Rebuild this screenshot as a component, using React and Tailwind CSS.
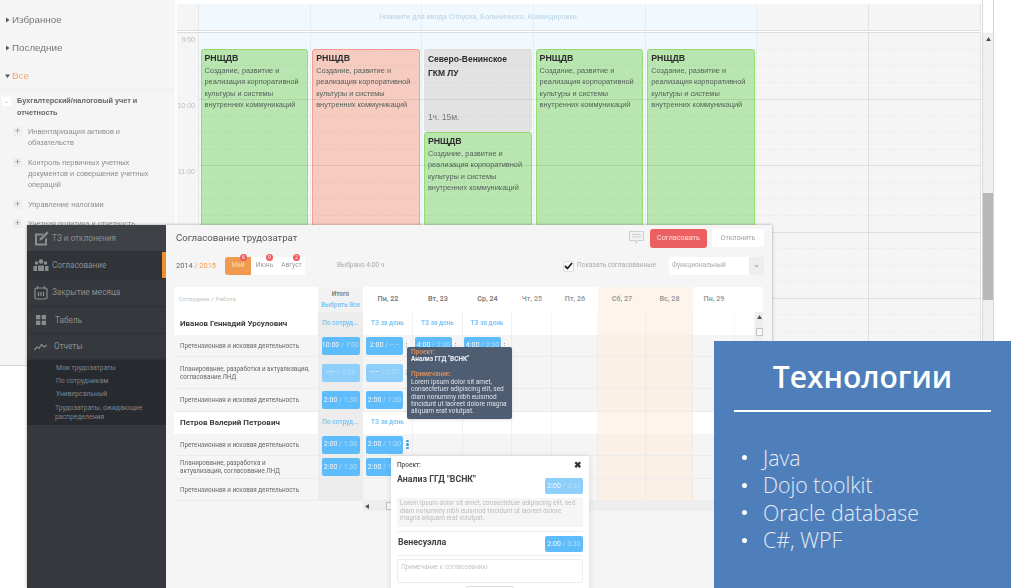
import React from "react";

const sans = "font-['Open_Sans','Noto_Sans',sans-serif]";
const rob = "font-['Roboto','Open_Sans',sans-serif]";
const arial = "font-['Liberation_Sans',Arial,sans-serif]";

const TREE = [
  { t: "Инвентаризация активов и\nобязательств", h: "h-[31px]" },
  { t: "Контроль первичных учетных\nдокументов и совершение учетных\nопераций", h: "h-[42px]" },
  { t: "Управление налогами", h: "h-[19px]" },
  { t: "Учетная политика и отчетность", h: "h-[19px]" },
];

function Arrow({ down }) {
  return (
    <svg width="5" height="6" viewBox="0 0 5 6" className="shrink-0">
      {down ? <path d="M0 1.5h5L2.5 5z" fill="#555" /> : <path d="M1 .5l3.5 2.5L1 5.500z" fill="#555" />}
    </svg>
  );
}

function Tree() {
  return (
    <div className={`w-[175px] h-full shrink-0 bg-[#f5f5f5] overflow-hidden ${arial}`}>
      <div className="h-[90px] border-b border-[#eeeeee] pt-[13px] pl-[5px] text-[9.800px] leading-[14px] text-[#777]">
        <div className="flex items-center gap-[2px] h-[14px]"><Arrow />Избранное</div>
        <div className="flex items-center gap-[2px] h-[14px] mt-[14px]"><Arrow />Последние</div>
        <div className="flex items-center gap-[2px] h-[14px] mt-[14px] text-[#f5a878]"><Arrow down />Все</div>
      </div>
      <div className="flex pt-[5px] pl-[2px] h-[34px]">
        <div className="w-[9px] h-[9px] bg-white flex items-center justify-center text-[7px] leading-none text-[#888] mt-[2px]">-</div>
        <div className="ml-[6px] text-[7.300px] leading-[11.500px] font-bold text-[#666] whitespace-nowrap">
          Бухгалтерский/налоговый учет и<br />отчетность
        </div>
      </div>
      <div className="pt-[1px]">
        {TREE.map((r) => (
          <div key={r.t} className={`flex pl-[13px] ${r.h}`}>
            <div className="w-[9px] h-[9px] bg-[#eeeeee] flex items-center justify-center mt-[2px] text-[9px] leading-none text-[#888]">+</div>
            <div className="ml-[6px] pt-[1px] text-[7.400px] leading-[11.200px] text-[#8c8c8c] whitespace-pre">{r.t}</div>
          </div>
        ))}
      </div>
    </div>
  );
}

function EventBlock({ tone, h, title, body }) {
  const tones = {
    green: "bg-[#b9e6b0] border-[#96dd70]",
    red: "bg-[#f6cbc0] border-[#f89c94]",
    grey: "bg-[#e2e2e2] border-[#e2e2e2]",
  };
  return (
    <div className={`mx-[1.500px] border-[1.500px] rounded-[3px] px-[3px] pt-[2px] ${tones[tone]} ${h} ${arial}`}>
      <div className="text-[8.800px] leading-[13px] font-bold text-[#2c2c2c]">{title}</div>
      {body && (
        <div className="text-[7.400px] leading-[11.300px] text-[#55615a] whitespace-pre">{body}</div>
      )}
    </div>
  );
}

const BODY = "Создание, развитие и\nреализация корпоративной\nкультуры и системы\nвнутренних коммуникаций";

function Calendar() {
  const hours = ["9:00", "10:00", "11:00", "", ""];
  return (
    <div className="flex-1 h-full flex flex-col pt-[4px] ml-[2px] bg-white min-w-0">
      <div className="grid grid-cols-[22px_repeat(7,111.700px)] h-[27px] shrink-0 border-b border-[#dddddd] bg-[#f5f5f5]">
        <div className="row-start-1 col-start-1 border-r border-[#e6e6e6]" />
        {[0, 1, 2, 3, 4].map((i) => (
          <div key={i} className="row-start-1 bg-[#f1f9fe] border-r border-[#e6eef2]" style={{ gridColumnStart: i + 2 }} />
        ))}
        <div className="row-start-1 col-start-7 border-r border-[#e2e2e2]" />
        <div className="row-start-1 col-start-8 border-r border-[#e2e2e2]" />
        <div className={`row-start-1 col-start-2 col-span-5 flex items-center justify-center text-[7.300px] text-[#b5d2e4] z-10 ${arial}`}>
          Нажмите для ввода Отпуска, Больничного, Командировки
        </div>
      </div>
      <div className="relative flex-1 mt-[1px] border-t border-[#dddddd] overflow-hidden bg-[#f5f5f5]">
        <div className="grid grid-cols-[22px_repeat(7,111.700px)] h-full">
          <div className={`border-r border-[#e6e6e6] text-right pr-[3px] text-[7px] text-[#bdbdbd] ${arial}`}>
            {hours.map((h, i) => (
              <div key={i} className="h-[66.200px] pt-[2px] leading-[10px]">{h}</div>
            ))}
          </div>
          <div className="bg-[#f1f9fe] border-r border-[#e6eef2] pt-[16px]">
            <EventBlock tone="green" h="h-[300px]" title="РНЩДВ" body={BODY} />
          </div>
          <div className="bg-[#f1f9fe] border-r border-[#e6eef2] pt-[16px]">
            <EventBlock tone="red" h="h-[300px]" title="РНЩДВ" body={BODY} />
          </div>
          <div className="bg-[#f1f9fe] border-r border-[#e6eef2] pt-[16px]">
            <EventBlock tone="grey" h="h-[83px]" title={<span className="leading-[14px] block whitespace-nowrap text-[8.500px]">Северо-Венинское<br />ГКМ ЛУ<br /><span className="block mt-[30px] font-normal text-[#777]">1ч. 15м.</span></span>} />
            <EventBlock tone="green" h="h-[200px]" title="РНЩДВ" body={BODY} />
          </div>
          <div className="bg-[#f1f9fe] border-r border-[#e6eef2] pt-[16px]">
            <EventBlock tone="green" h="h-[300px]" title="РНЩДВ" body={BODY} />
          </div>
          <div className="bg-[#f1f9fe] border-r border-[#e6eef2] pt-[16px]">
            <EventBlock tone="green" h="h-[300px]" title="РНЩДВ" body={BODY} />
          </div>
          <div className="border-r border-[#e0e0e0]" />
          <div className="border-r border-[#e0e0e0]" />
        </div>
        <div className="absolute inset-0 left-[22px] pointer-events-none">
          {hours.map((h, i) => (
            <div key={i} className={`h-[66.200px] ${i === 0 ? "" : "border-t border-[#00000015]"}`}>
              <div className="h-[16.500px] border-b border-dashed border-[#0000000a]" />
              <div className="h-[16.500px] border-b border-dashed border-[#0000000a]" />
              <div className="h-[16.500px] border-b border-dashed border-[#0000000a]" />
            </div>
          ))}
        </div>
      </div>
    </div>
  );
}

function BackWindow() {
  return (
    <div className="absolute left-0 top-0 w-[994px] h-[366px] flex border-b border-[#d4d4d4] border-r bg-white blur-[0.6px] overflow-hidden">
      <Tree />
      <Calendar />
      <div className="w-[11px] h-full shrink-0 flex flex-col border-l border-[#d8d8d8] ml-[1px]">
        <div className="h-[33px]" />
        <div className="flex-1 bg-[#f0f0f0] flex flex-col">
          <div className="h-[11px] flex items-center justify-center">
            <svg width="5" height="4" viewBox="0 0 5 4"><path d="M0 4l2.500-4L5 4z" fill="#555" /></svg>
          </div>
          <div className="h-[149px]" />
          <div className="h-[107px] bg-[#b8b8b8]" />
        </div>
      </div>
    </div>
  );
}

const Ic = {
  edit: (
    <svg width="15" height="15" viewBox="0 0 15 15" fill="#8a8d8f">
      <path d="M1 2.500h9l-2 2H3v8h8V8.500l2-2V14.500H1z" />
      <path d="M12.800.5l1.800 1.800-6.800 6.800-2.500.7.700-2.500z" />
    </svg>
  ),
  group: (
    <svg width="16" height="12" viewBox="0 0 16 12" fill="#8a8d8f">
      <circle cx="8" cy="2.500" r="2.300" /><circle cx="3.500" cy="4" r="1.800" /><circle cx="12.500" cy="4" r="1.800" />
      <path d="M5 12V6.500h6V12zM.5 12V7H4v5zM12 12V7h3.500v5z" />
    </svg>
  ),
  cal: (
    <svg width="14" height="14" viewBox="0 0 14 14" fill="none" stroke="#8a8d8f" strokeWidth="1.200">
      <rect x="1" y="2" width="12" height="11" rx="1.500" />
      <path d="M3.500 0v3M10.500 0v3M4.500 6v4M7 6v4M9.500 6v4" />
    </svg>
  ),
  grid: (
    <svg width="10" height="10" viewBox="0 0 10 10" fill="#8a8d8f">
      <rect width="4.300" height="4.300" /><rect x="5.700" width="4.300" height="4.300" />
      <rect y="5.700" width="4.300" height="4.300" /><rect x="5.700" y="5.700" width="4.300" height="4.300" />
    </svg>
  ),
  chart: (
    <svg width="13" height="8" viewBox="0 0 13 8" fill="none" stroke="#8a8d8f" strokeWidth="1.200">
      <path d="M0 7l3-3 2 1.500L7.500 1.500 10 4l3-2" />
    </svg>
  ),
};

function Sidebar() {
  const items = [
    { i: Ic.edit, t: "ТЗ и отклонения", h: "h-[27px]", bg: "bg-[#3e4145]", pl: "pl-[7px]", g: "w-[18px]" },
    { i: Ic.group, t: "Согласование", h: "h-[27px]", bg: "bg-[#303337]", active: true, pl: "pl-[6px]", g: "w-[19px]" },
    { i: Ic.cal, t: "Закрытие месяца", h: "h-[28px]", bg: "bg-[#35383c]", pl: "pl-[7px]", g: "w-[18px]" },
    { i: Ic.grid, t: "Табель", h: "h-[27px]", bg: "bg-[#35383c]", pl: "pl-[9px]", g: "w-[19px]" },
    { i: Ic.chart, t: "Отчеты", h: "h-[26px]", bg: "bg-[#35383c]", pl: "pl-[7px]", g: "w-[20px]" },
  ];
  return (
    <div className="w-[139px] h-full shrink-0 bg-[#35383c] flex flex-col">
      {items.map((it) => (
        <div key={it.t} className={`relative flex items-center border-b border-[#2e3135] text-[#8b8e91] text-[8.200px] ${it.h} ${it.bg} ${it.pl}`}>
          <div className={`${it.g} flex items-center shrink-0`}>{it.i}</div>
          {it.t}
          {it.active && <div className="absolute right-0 top-0 bottom-0 w-[4px] bg-[#ef8f2f]" />}
        </div>
      ))}
      <div className="h-[65px] bg-[#272a2e] text-[6.800px] leading-[8.500px] text-[#80848a] pl-[29px] pt-[4px]">
        <div className="h-[13px]">Мои трудозатраты</div>
        <div className="h-[13px]">По сотрудникам</div>
        <div className="h-[14px]">Универсальный</div>
        <div className="-ml-[1px]">Трудозатраты, ожидающие<br />распределения</div>
      </div>
    </div>
  );
}

function Tab({ t, n, active }) {
  return (
    <div className={`relative h-[18px] flex items-center justify-center text-[6.600px] ${active ? "w-[26px] bg-[#f09a50] text-[#fbd9b8] rounded-l-[3px]" : "w-[27px] bg-white text-[#999]"}`}>
      {t}
      <span className="absolute -top-[3px] left-[15px] w-[7px] h-[7px] rounded-full bg-[#ee5a5f] text-white text-[5px] leading-[7px] text-center">{n}</span>
    </div>
  );
}

function Chip({ a, b, soft, w = "w-[38px]", h = "h-[18px]" }) {
  return (
    <div className={`${w} ${h} rounded-[2px] flex items-center justify-center text-[7px] whitespace-pre shrink-0 ${soft ? "bg-[#8dcefa]" : "bg-[#5fbcfa]"} text-[#f2f9fe]`}>
      {a}<span className="text-[#b0defc]"> / {b}</span>
    </div>
  );
}

const GRID = "grid grid-cols-[144px_45px_50px_50px_49px_40px_46px_48px_47px_42px_20px]";

function Blanks({ white }) {
  const w = white
    ? ["bg-white", "bg-white", "bg-[#fdf4ec]", "bg-[#fdf4ec]", "bg-white", "bg-white"]
    : ["", "", "bg-[#faf0e6]", "bg-[#faf0e6]", "", ""];
  return w.map((c, i) => <div key={i} className={`border-r border-[#00000008] ${c}`} />);
}

function PersonRow({ name, first, second, h, w3 }) {
  const link = "flex items-center justify-center text-[6.500px] font-semibold text-[#79c4f7] whitespace-nowrap";
  return (
    <div className={`${GRID} ${h} bg-white`}>
      <div className="flex items-center pl-[6px] text-[8px] font-bold text-[#3c3c3c] whitespace-nowrap">{name}</div>
      <div className={`bg-[#ececec] ${link}`}>{first}</div>
      <div className={`${link} border-r border-[#f0f0f0]`}>{second}</div>
      <div className={`${link} border-r border-[#f0f0f0]`}>{w3 ? "ТЗ за день" : ""}</div>
      <div className={`${link} border-r border-[#f0f0f0]`}>{w3 ? "ТЗ за день" : ""}</div>
      <Blanks white />
    </div>
  );
}

function Dots({ on }) {
  return (
    <span className="ml-[3px] flex flex-col gap-[1px]">
      {[0, 1, 2].map((i) => (
        <span key={i} className={`rounded-full ${on ? "w-[3px] h-[2.500px] bg-[#3d9bd9]" : "w-[1px] h-[1px] bg-[#999]"}`} />
      ))}
    </span>
  );
}

function WorkRow({ label, h, total, c1, c2, c3, soft, dots, blue }) {
  return (
    <div className={`${GRID} ${h} border-b border-[#ececec]`}>
      <div className="flex items-center pl-[6px] text-[6.300px] leading-[8px] text-[#666] whitespace-nowrap">{label}</div>
      <div className="bg-[#ececec] flex items-center justify-center">
        {total && <Chip a={total[0]} b={total[1]} soft={soft} />}
      </div>
      <div className="flex items-center pl-[3px] border-r border-[#ececec]">
        {c1 && <Chip a={c1[0]} b={c1[1]} soft={soft} w="w-[37px]" />}
        {dots && <Dots on={blue} />}
      </div>
      <div className="flex items-center pl-[2px] border-r border-[#ececec]">
        {c2 && <Chip a={c2[0]} b={c2[1]} w="w-[37px]" />}
        {c2 && <Dots />}
      </div>
      <div className="flex items-center pl-[1px] border-r border-[#ececec]">
        {c3 && <Chip a={c3[0]} b={c3[1]} w="w-[37px]" />}
        {c3 && <Dots />}
      </div>
      <Blanks />
    </div>
  );
}

function Table() {
  return (
    <div className="w-[589px] mt-[6px] relative">
      <div className="grid grid-cols-[144px_45px_50px_50px_49px_40px_46px_48px_47px_42px_28px] h-[25px] bg-white text-[7.200px] font-semibold text-[#777]">
        <div className="flex items-center pl-[5px] font-normal text-[6.200px] text-[#c4c4c4]">Сотрудник / Работа</div>
        <div className="bg-[#f2f2f2] flex flex-col items-center justify-center leading-[11px] whitespace-nowrap text-[6.400px]">
          <span>Итого</span>
          <span className="text-[#79c4f7]">Выбрать Все</span>
        </div>
        <div className="flex items-center justify-center">Пн, 22</div>
        <div className="flex items-center justify-center">Вт, 23</div>
        <div className="flex items-center justify-center">Ср, 24</div>
        <div className="flex items-center justify-center text-[#999]">Чт, 25</div>
        <div className="flex items-center justify-center text-[#999]">Пт, 26</div>
        <div className="bg-[#fdf4ec] flex items-center justify-center text-[#999]">Сб, 27</div>
        <div className="bg-[#fdf4ec] flex items-center justify-center text-[#999]">Вс, 28</div>
        <div className="flex items-center justify-center text-[#999]">Пн, 29</div>
        <div />
      </div>
      <div className="flex">
        <div className="w-[581px] overflow-hidden">
          <PersonRow name="Иванов Геннадий Урсулович" first="По сотруд..." second="ТЗ за день" h="h-[23px]" w3 />
          <WorkRow h="h-[22px]" label="Претензионная и исковая деятельность" total={["10:00", "7:00"]} c1={["2:00", "--:--"]} c2={["4:00", "2:30"]} c3={["4:00", "2:30"]} dots />
          <WorkRow h="h-[32px]" label={<span>Планирование, разработка и актуализация,<br />согласование ЛНД</span>} total={["--:--", "2:30"]} c1={["--:--", "2:30"]} soft dots />
          <WorkRow h="h-[23px]" label="Претензионная и исковая деятельность" total={["2:00", "1:30"]} c1={["2:00", "1:30"]} />
          <PersonRow name="Петров Валерий Петрович" first="По сотруд..." second="ТЗ за день" h="h-[22px]" />
          <WorkRow h="h-[22px]" label="Претензионная и исковая деятельность" total={["2:00", "1:30"]} c1={["2:00", "1:30"]} dots blue />
          <WorkRow h="h-[23px]" label={<span>Планирование, разработка и<br />актуализация, согласование ЛНД</span>} total={["2:00", "1:30"]} c1={["2:00", "1:30"]} />
          <WorkRow h="h-[22px]" label="Претензионная и исковая деятельность" />
        </div>
        <div className="w-[8px] bg-[#eeeeee] flex flex-col items-center pt-[3px]">
          <svg width="5" height="4" viewBox="0 0 5 4"><path d="M0 4l2.500-4L5 4z" fill="#555" /></svg>
          <div className="w-[7px] h-[8px] mt-[9px] bg-[#f8f8f8] border border-[#c4c4c4]" />
        </div>
      </div>
      <div className="ml-[189px] w-[392px] h-[10px] bg-[#eeeeee] flex items-center pl-[2px] gap-[17px]">
        <svg width="4" height="5" viewBox="0 0 4 5"><path d="M4 0L0 2.500 4 5z" fill="#555" /></svg>
        <div className="w-[8px] h-[8px] bg-[#f8f8f8] border border-[#c4c4c4]" />
      </div>
    </div>
  );
}

function Tooltip() {
  return (
    <div className="absolute left-[241px] top-[122px] w-[105px] h-[72px] rounded-[2px] bg-[#4f5d73] px-[4px] pt-[2px] text-[6.500px] leading-[7.400px] text-[#dde3ea] shadow-sm whitespace-nowrap z-20">
      <div className="text-[#e0905a] font-medium">Проект:</div>
      <div className="font-bold text-[#f0f3f6]">Анализ ГГД "ВСНК"</div>
      <div className="text-[#e0905a] font-medium mt-[7.500px]">Примечание:</div>
      Lorem ipsum dolor sit amet,<br />
      consectetuer adipiscing elit, sed<br />
      diam nonummy nibh euismod<br />
      tincidunt ut laoreet dolore magna<br />
      aliquam erat volutpat.
    </div>
  );
}

function Popup() {
  return (
    <div className="absolute left-[225px] top-[231px] w-[198px] h-[140px] bg-white shadow-[0_0_6px_rgba(0,0,0,0.12)] px-[6px] pt-[5px] z-10 overflow-hidden">
      <div className="flex justify-between items-center h-[9px] text-[6.500px] font-medium text-[#555]">
        <span>Проект:</span>
        <span className="text-[9px] font-bold text-[#333] pr-[1px]">✖</span>
      </div>
      <div className="flex justify-between mt-[4px]">
        <span className="text-[8.800px] font-bold text-[#444] leading-[11px]">Анализ ГГД "ВСНК"</span>
        <div className="mt-[4px]"><Chip a="2:00" b="3:30" soft w="w-[38px]" h="h-[16px]" /></div>
      </div>
      <div className="mt-[4px] h-[29px] bg-[#f5f5f5] px-[3px] pt-[2px] text-[6.500px] leading-[7.500px] text-[#bdbdbd] whitespace-nowrap">
        Lorem ipsum dolor sit amet, consectetuer adipiscing elit, sed<br />
        diam nonummy nibh euismod tincidunt ut laoreet dolore<br />
        magna aliquam erat volutpat.
      </div>
      <div className="flex justify-between items-start mt-[4px] border-t border-[#eeeeee] pt-[4px] h-[25px] border-b">
        <span className="text-[8.800px] font-bold text-[#444] leading-[12px] pl-[1px]">Венесуэлла</span>
        <Chip a="2:00" b="3:30" w="w-[38px]" h="h-[16px]" />
      </div>
      <div className="mt-[3px] h-[24px] border border-[#eeeeee] rounded-[2px] px-[3px] pt-[3px] text-[6.500px] italic text-[#c4c4c4]">
        Примечание к согласованию
      </div>
      <div className="mx-auto mt-[3px] w-[48px] h-[6px] border border-[#dddddd] rounded-[2px]" />
    </div>
  );
}

function FrontWindow() {
  return (
    <div className={`absolute left-[27px] top-[225px] w-[745px] h-[363px] flex bg-[#f5f5f5] shadow-[0_0_3px_rgba(0,0,0,0.35)] blur-[0.5px] overflow-hidden ${rob}`}>
      <Sidebar />
      <div className="relative flex-1 min-w-0 pl-[8px]">
        <div className="flex items-center h-[26px] pl-[2px] pr-[8px]">
          <span className="text-[9.600px] text-[#555]">Согласование трудозатрат</span>
          <svg width="15" height="14" viewBox="0 0 15 14" className="ml-auto mr-[6px]" fill="#f2f2f2" stroke="#cfcfcf">
            <path d="M.5.500h14v9H9l-2 3v-3H.5z" />
            <path d="M3 3.500h9M3 6h9" />
          </svg>
          <button className="w-[57px] h-[19px] rounded-[3px] bg-[#ec5f60] text-[7.200px] text-[#fde3e3]">Согласовать</button>
          <button className="ml-[5px] w-[52px] h-[18px] bg-white rounded-[2px] text-[6.900px] text-[#a0a0a0]">Отклонить</button>
        </div>
        <div className="flex items-center h-[24px] mt-[3px] pl-[2px] pr-[8px]">
          <span className="text-[7.400px] text-[#666] w-[49px] whitespace-nowrap">2014 <span className="text-[#ef9a45]">/ 2015</span></span>
          <Tab t="Май" n="6" active />
          <Tab t="Июнь" n="9" />
          <Tab t="Август" n="2" />
          <span className="ml-[32px] text-[6.600px] text-[#a8a8a8]">Выбрано 4:00 ч</span>
          <div className="ml-auto w-[11px] h-[11px] bg-white border border-[#dddddd] rounded-[2px] flex items-center justify-center">
            <svg width="9" height="8" viewBox="0 0 9 8" fill="none" stroke="#222" strokeWidth="1.800"><path d="M1 4l2.500 2.500L8 1" /></svg>
          </div>
          <span className="ml-[3px] w-[92px] text-[6.600px] text-[#a8a8a8] whitespace-nowrap">Показать согласованные</span>
          <div className="w-[95px] h-[18px] bg-white flex items-center pl-[3px] text-[6.500px] text-[#a8a8a8] rounded-[2px]">
            Функциональный
            <div className="ml-auto w-[15px] h-full bg-[#eeeeee] flex items-center justify-center">
              <svg width="5" height="3" viewBox="0 0 5 3"><path d="M0 0l2.500 3L5 0z" fill="#c0c0c0" /></svg>
            </div>
          </div>
        </div>
        <div className="flex mt-[3px]"><Table /></div>
        <Tooltip />
        <Popup />
      </div>
    </div>
  );
}

function BluePanel() {
  const items = ["Java", "Dojo toolkit", "Oracle database", "C#, WPF"];
  return (
    <div className={`absolute left-[714px] top-[341px] w-[297px] h-[247px] bg-[#4f7fba] ${sans}`}>
      <div className="h-[71px] mx-[20px] border-b-2 border-white flex items-center justify-center text-[30px] font-semibold text-white pt-[2px]">
        Технологии
      </div>
      <ul className="pt-[32px] pl-[28px]">
        {items.map((t) => (
          <li key={t} className="h-[27.500px] flex items-center text-[21.300px] font-light text-[#e4ebf5]">
            <span className="w-[5px] h-[5px] rounded-full bg-white mr-[16px]" />
            {t}
          </li>
        ))}
      </ul>
    </div>
  );
}

export default function App() {
  return (
    <div className="relative w-[1011px] h-[588px] overflow-hidden bg-white">
      <BackWindow />
      <FrontWindow />
      <BluePanel />
    </div>
  );
}
